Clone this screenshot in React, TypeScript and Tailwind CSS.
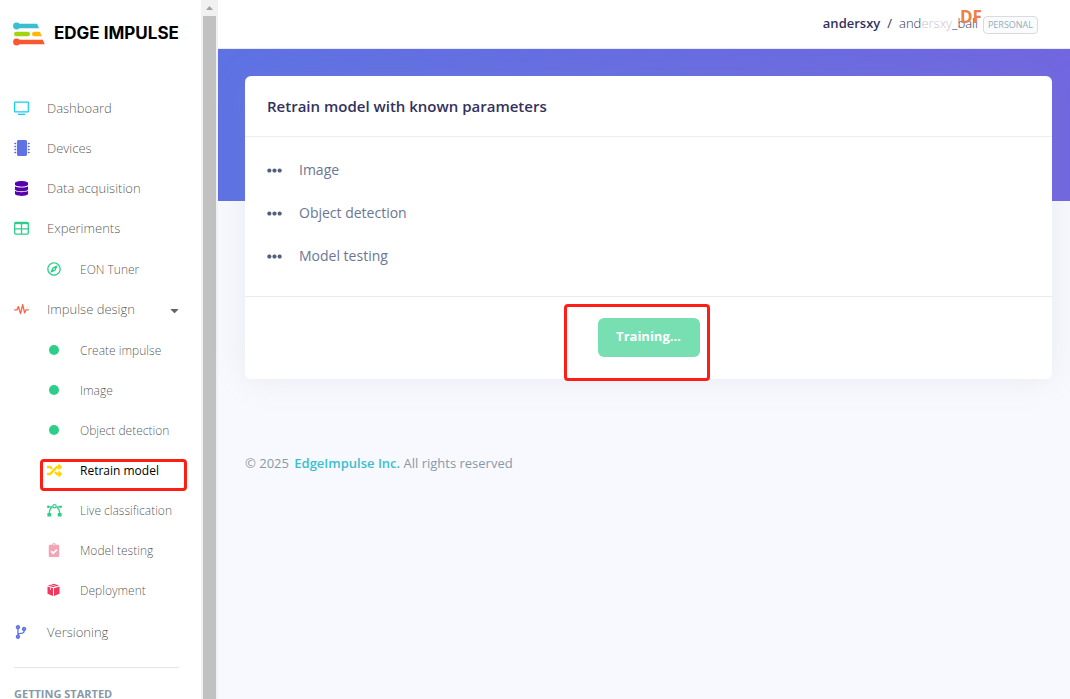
import type { ReactNode } from 'react'
import { FaCaretDown, FaClipboardCheck, FaCodeBranch, FaDatabase, FaEllipsisH, FaMicrochip, FaRandom, FaRegCompass } from 'react-icons/fa'

const steps = ['Image', 'Object detection', 'Model testing']

function Logo() {
  return <svg width="32" height="24" viewBox="0 0 32 24" aria-hidden="true">
    <path d="M3.500 1.700H24.200L26 6.300H3.500Z" fill="#3bbfcf" />
    <circle cx="3.500" cy="4" r="3.400" fill="#3bbfcf" />
    <rect x="1" y="9.700" width="16" height="4.600" rx="2.300" fill="#a3d40e" />
    <path d="M21.300 9.700H26Q27 9.700 27.400 10.700L28.800 14.300H21.300A2.300 2.300 0 0 1 21.300 9.700Z" fill="#ffb70a" />
    <path d="M3.500 17.700H29.800L31.700 22.300H3.500Z" fill="#f9572f" />
    <circle cx="3.500" cy="20" r="3.400" fill="#f9572f" />
  </svg>
}

function ScreenIcon() {
  return <svg width="15" height="15" viewBox="0 0 15 15" fill="none" stroke="#11cdef" aria-hidden="true">
    <rect x=".6" y="1.100" width="13.700" height="9.800" rx=".4" strokeWidth="1.200" />
    <path d="M4 13.300H11" strokeWidth="1.300" />
  </svg>
}

function TableIcon() {
  return <svg width="15" height="15" viewBox="0 0 15 15" fill="none" stroke="#2dce89" aria-hidden="true">
    <rect x=".7" y="1.500" width="13.600" height="11.600" rx="1" strokeWidth="1.300" />
    <path d="M.7 2.300H14.300" strokeWidth="1.800" />
    <path d="M.7 7.900H14.300M7.500 2V13" strokeWidth="1.300" />
  </svg>
}

function PulseIcon() {
  return <svg width="15" height="15" viewBox="0 0 15 15" fill="none" stroke="#fb6340" strokeWidth="1.300" strokeLinejoin="round" strokeLinecap="round" aria-hidden="true">
    <path d="M.7 7.800H3L4.400 4.600L6.500 11.600L8.700 2.600L10.600 10.800L12 7.800H14.300" />
  </svg>
}

function CurveIcon() {
  return <svg width="15" height="15" viewBox="0 0 15 15" fill="none" stroke="#2dce89" strokeWidth="1.200" aria-hidden="true">
    <path d="M1.500 3.800H5.300M9.700 3.800H13.500M5.400 4.300C3.200 5.400 2.300 7.300 2.200 10M9.600 4.300C11.800 5.400 12.700 7.300 12.800 10" />
    <circle cx="7.500" cy="3.200" r="1.700" />
    <circle cx="1.300" cy="3.800" r=".7" />
    <circle cx="13.700" cy="3.800" r=".7" />
    <path d="M.4 10H4.200V13.600H.4ZM10.800 10H14.600V13.600H10.800Z" fill="#2dce89" stroke="none" />
  </svg>
}

function BoxIcon() {
  return <svg width="14" height="14" viewBox="0 0 14 14" fill="#f5365c" aria-hidden="true">
    <path d="M6.500 .8L12 2.500L6.500 4.300L1 2.500Z" />
    <path d="M.5 3.500L6 5.300V13L.5 10.800Z" />
    <path d="M12.500 3.500L7 5.300V13L12.500 10.800Z" />
    <path d="M3.400 1.600L9.400 3.600M3.500 4.300V7" stroke="#fff" strokeWidth=".7" />
  </svg>
}

const Dot = () => <span className="ml-0.5 block size-2.5 rounded-full bg-[#2dce89]" />

function NavItem({ icon, label, caret }: { icon: ReactNode; label: string; caret?: boolean }) {
  return <a href="#" className="flex h-10 items-center pr-5 pl-3.5 text-[13px] font-light text-black/70">
    <span className="flex w-[33px] shrink-0 items-center pb-0.5">{icon}</span>
    <span className="flex-1">{label}</span>
    {caret && <FaCaretDown size={13} className="text-black/60" />}
  </a>
}

function SubItem({ icon, label, active }: { icon: ReactNode; label: string; active?: boolean }) {
  return <li className="relative">
    <a href="#" className={`flex h-10 items-center pl-[47px] text-xs ${active ? 'text-black' : 'font-light text-black/70'}`}>
      <span className="flex w-[33px] shrink-0 items-center pb-0.5">{icon}</span>
      {label}
    </a>
    {active && <span className="pointer-events-none absolute top-2 right-3.5 left-10 h-8 rounded-sm border-3 border-[#ff1e14]" />}
  </li>
}

function Sidebar() {
  return <aside className="w-[201px] shrink-0 overflow-hidden bg-white">
    <a href="#" className="flex h-[67px] items-center gap-[9px] pl-[13px] font-['Inter',sans-serif] text-[17px] font-bold text-black"><Logo />EDGE IMPULSE</a>
    <nav className="pt-[22px]">
      <NavItem icon={<ScreenIcon />} label="Dashboard" />
      <NavItem icon={<FaMicrochip size={16} color="#5e72e4" />} label="Devices" />
      <NavItem icon={<FaDatabase size={15} color="#5603ad" />} label="Data acquisition" />
      <NavItem icon={<TableIcon />} label="Experiments" />
      <ul className="pt-px">
        <SubItem icon={<FaRegCompass size={14} color="#2dce89" />} label="EON Tuner" />
      </ul>
      <NavItem icon={<PulseIcon />} label="Impulse design" caret />
      <ul className="pt-px pb-0.5">
        <SubItem icon={<Dot />} label="Create impulse" />
        <SubItem icon={<Dot />} label="Image" />
        <SubItem icon={<Dot />} label="Object detection" />
        <SubItem icon={<FaRandom size={15} color="#ffd600" />} label="Retrain model" active />
        <SubItem icon={<CurveIcon />} label="Live classification" />
        <SubItem icon={<FaClipboardCheck size={14} color="#f3a4b5" />} label="Model testing" />
        <SubItem icon={<BoxIcon />} label="Deployment" />
      </ul>
      <NavItem icon={<FaCodeBranch size={14} color="#5e72e4" />} label="Versioning" />
    </nav>
    <hr className="mt-3.5 mr-[22px] ml-3.5 border-black/10" />
    <h6 className="mt-4 ml-3.5 text-[11px] leading-5 font-bold text-[#8898aa]">GETTING STARTED</h6>
  </aside>
}

function ScrollTrack() {
  return <div className="flex w-[17px] shrink-0 flex-col items-center bg-[#f1f1f1]" aria-hidden="true">
    <svg width="16" height="16" viewBox="0 0 16 16"><path d="M4 10H11L7.500 6Z" fill="#a3a3a3" /></svg>
    <div className="w-[13px] flex-1 bg-[#c1c1c1]" />
  </div>
}

function Header() {
  return <header className="flex h-[49px] items-center justify-end border-b border-[#e9ecef] bg-white pr-8 text-[13px] text-[#32325d]">
    <a href="#" className="font-semibold">andersxy</a>
    <span className="mx-[7px]">/</span>
    <div className="relative">
      <a href="#" className="font-light">and<span className="opacity-30">ersxy</span>_ball</a>
      <span className="absolute -top-[9px] -right-1 text-[17px] leading-6 font-bold text-[#ef7f45]">DF</span>
    </div>
    <span className="mt-0.5 ml-[5px] rounded-sm border border-[#d5dde2] bg-[#f9fbfc] px-1 text-[9px] leading-4 text-[#9aabba]">PERSONAL</span>
  </header>
}

function TrainingCard() {
  return <section className="rounded-md bg-white shadow-[0_0_32px_rgba(136,152,170,0.15)]">
    <h1 className="border-b border-[#eceef1] px-[22px] py-[18px] text-[15px] leading-6 font-semibold text-[#32325d]">Retrain model with known parameters</h1>
    <ul className="flex flex-col gap-[19px] px-[22px] pt-[21px] pb-7 text-sm leading-6 text-[#6b7694]">
      {steps.map(step => <li key={step} className="flex items-center gap-[17px]"><FaEllipsisH size={15} color="#525f7f" />{step}</li>)}
    </ul>
    <footer className="flex justify-center border-t border-[#e9ecef] pt-[21px] pb-[22px]">
      <div className="relative">
        <button type="button" disabled className="h-[39px] w-[102px] rounded-md bg-[#77dfb2] pb-0.5 text-[13px] font-bold text-white">Training...</button>
        <span className="pointer-events-none absolute -top-3.5 -right-2.5 -bottom-6 -left-[34px] rounded-sm border-3 border-[#ff1e14]" />
      </div>
    </footer>
  </section>
}

export default function App() {
  return <div className="flex h-screen overflow-hidden bg-[#f8f9fe] font-['Open_Sans',sans-serif]">
    <Sidebar />
    <ScrollTrack />
    <div className="flex min-w-0 flex-1 flex-col">
      <Header />
      <div className="h-[152px] bg-linear-[87deg] from-[#5e72e4] to-[#7167e0]" />
      <main className="-mt-[125px] pr-[18px] pl-[27px]">
        <TrainingCard />
        <footer className="mt-[74px] text-[13px] leading-5 text-[#8898aa]">
          © 2025 <a href="#" className="ml-0.5 font-semibold text-[#3bbfcf]">EdgeImpulse Inc.</a> All rights reserved
        </footer>
      </main>
    </div>
  </div>
}
